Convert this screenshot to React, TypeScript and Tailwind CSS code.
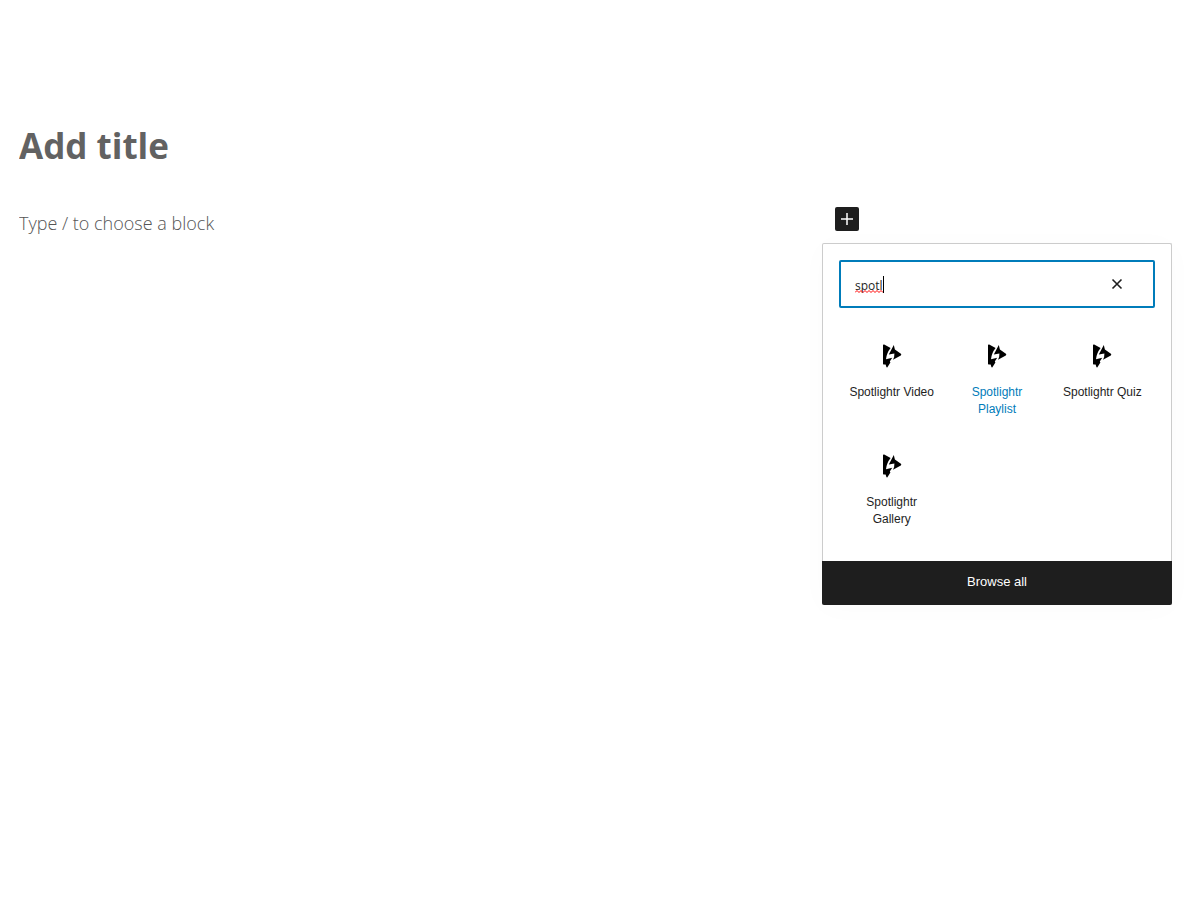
import { useState } from "react";

type Block = {
  name: string;
  active?: boolean;
};

const blocks: Block[] = [
  { name: "Spotlightr Video" },
  { name: "Spotlightr Playlist", active: true },
  { name: "Spotlightr Quiz" },
  { name: "Spotlightr Gallery" },
];

function SpotlightrIcon() {
  return (
    <svg width="24" height="24" viewBox="0 0 24 24" aria-hidden="true">
      <path d="M3 1 Q3.2.2 4.2.6L10.6 4 Q6.6 9 6 15.2L12.2 13.8 9.8 17.6 10.4 18.4 7.4 23.2 Q6.8 23.8 6.4 23L5.6 20.6 3.6 20.4 Q3 20.4 3 19.8Z" />
      <path d="M13.8 1 14.9 5.6 20.9 9.8 Q21.8 10.6 20.8 11.4L13 15.8 Q14.6 12.6 14.4 9.4L8.8 10.6Z" />
    </svg>
  );
}

function Inserter() {
  const [query, setQuery] = useState("spotl");

  return (
    <div className="mt-3 flex flex-col rounded-xs border border-b-0 border-[#ccc] bg-white shadow-[0_3px_30px_rgba(25,30,35,0.02)]">
      <div className="relative m-4 mb-0">
        <input
          type="text"
          aria-label="Search for a block"
          value={query}
          onChange={(e) => setQuery(e.target.value)}
          spellCheck={false}
          className="h-12 w-full rounded-xs border-2 border-[#007cba] pt-0.5 pr-12 pl-3.5 font-['Open_Sans',sans-serif] text-xs text-[#1e1e1e] outline-none"
        />
        {query === "spotl" && (
          <div className="pointer-events-none absolute top-4 left-4 flex h-[17px] w-[29px] items-end border-r border-black">
            <svg width="28" height="3" viewBox="0 0 28 3" aria-hidden="true">
              <path
                d="M0 2.5 2 .5 4 2.5 6 .5 8 2.5 10 .5 12 2.5 14 .5 16 2.5 18 .5 20 2.5 22 .5 24 2.5 26 .5 28 2.5"
                fill="none"
                stroke="#f00"
              />
            </svg>
          </div>
        )}
        <button
          type="button"
          aria-label="Reset search"
          onClick={() => setQuery("")}
          className="absolute top-3 right-[26px] flex size-6 items-center justify-center"
        >
          <svg width="24" height="24" viewBox="0 0 24 24" aria-hidden="true">
            <path
              d="M7.5 7.5 16.5 16.5M16.5 7.5 7.5 16.5"
              fill="none"
              stroke="#1e1e1e"
              strokeWidth="1.6"
            />
          </svg>
        </button>
      </div>

      <div className="grid grid-cols-3 px-4 pt-4 pb-[17px]">
        {blocks.map((block) => (
          <button
            key={block.name}
            type="button"
            className="flex h-[110px] flex-col items-center px-2 pt-5"
          >
            <SpotlightrIcon />
            <span
              className={
                block.active
                  ? "mt-4 font-['Liberation_Sans',sans-serif] text-xs leading-[17px] text-[#007cba]"
                  : "mt-4 font-['Liberation_Sans',sans-serif] text-xs leading-[17px] text-[#1e1e1e]"
              }
            >
              {block.name}
            </span>
          </button>
        ))}
      </div>

      <button
        type="button"
        className="-mx-px h-11 rounded-b-xs bg-[#1e1e1e] pb-0.5 font-['Liberation_Sans',sans-serif] text-[13px] text-white"
      >
        Browse all
      </button>
    </div>
  );
}

export default function App() {
  return (
    <main className="min-h-screen bg-white pt-[120px] pr-7 pl-[19px] font-['Open_Sans',sans-serif]">
      <input
        type="text"
        aria-label="Add title"
        placeholder="Add title"
        className="block h-[52px] w-full text-[35px] font-bold text-[#1e1e1e] outline-none placeholder:text-[#626262]"
      />
      <div className="mt-[35px] flex items-start gap-6">
        <input
          type="text"
          aria-label="Block"
          placeholder="Type / to choose a block"
          className="h-8 min-w-0 flex-1 text-lg font-light text-[#1e1e1e] outline-none placeholder:text-[#555]"
        />
        <div className="w-[350px] shrink-0">
          <button
            type="button"
            aria-label="Add block"
            className="ml-[13px] flex size-6 items-center justify-center rounded-xs bg-[#1e1e1e]"
          >
            <svg width="24" height="24" viewBox="0 0 24 24" aria-hidden="true">
              <path
                d="M12 6v12M6 12h12"
                fill="none"
                stroke="#fff"
                strokeWidth="1.5"
              />
            </svg>
          </button>
          <Inserter />
        </div>
      </div>
    </main>
  );
}
